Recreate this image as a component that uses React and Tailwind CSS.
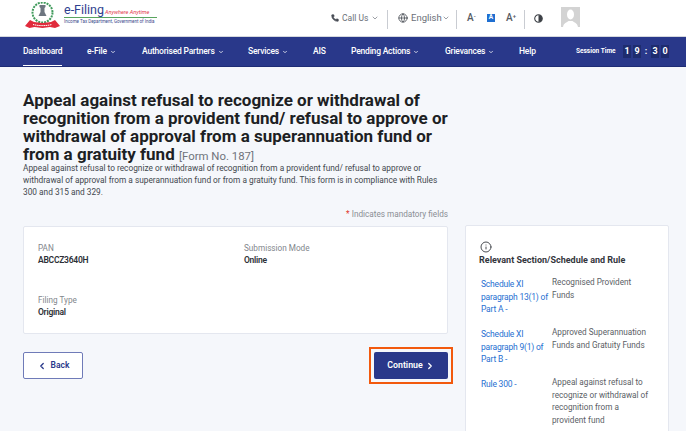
import { ChevronDown, ChevronLeft, ChevronRight, Globe, Info, Phone } from "lucide-react";

const navItems = [
  { label: "Dashboard", width: "w-[64px]", active: true },
  { label: "e-File", width: "w-[55px]", caret: true },
  { label: "Authorised Partners", width: "w-[106px]", caret: true },
  { label: "Services", width: "w-[65px]", caret: true },
  { label: "AIS", width: "w-[38px]" },
  { label: "Pending Actions", width: "w-[94px]", caret: true },
  { label: "Grievances", width: "w-[74px]", caret: true },
  { label: "Help", width: "w-[57px]" },
];

const sections = [
  { rule: "Schedule XI paragraph 13(1) of Part A -", text: "Recognised Provident Funds", height: "h-[50px]" },
  { rule: "Schedule XI paragraph 9(1) of Part B -", text: "Approved Superannuation Funds and Gratuity Funds", height: "h-[50px]" },
  { rule: "Rule 300 -", text: "Appeal against refusal to recognize or withdrawal of recognition from a provident fund", height: "h-[50px]" },
];

function Emblem() {
  return (
    <svg width="37" height="27" viewBox="0 0 37 27" className="mt-[2px] shrink-0">
      <circle cx="18.500" cy="10.500" r="10" fill="none" stroke="#3f9a5b" strokeWidth="2" strokeDasharray="2 1" />
      <path d="M15.500 3h6v2l-1 1v4l2 4h-8l2-4V6l-1-1z" fill="#6d7680" />
      <path d="M1 24l5-6 4 2 8.500 1 8.500-1 4-2 5 6-5 2-5-1-7.500 1-8-1-5 1z" fill="#e02b3c" />
      <path d="M9 22.500c6 1.500 13 1.500 19 0" fill="none" stroke="#fff" strokeWidth="1" strokeDasharray="1.500 .6" />
    </svg>
  );
}

function Divider() {
  return <div className="mt-[2px] h-[19px] w-px bg-[#c9ccd2]" />;
}

function Header() {
  return (
    <header className="flex h-[37px] items-center border-b border-[#d5d8de] bg-white text-[#6b7078]">
      <div className="ml-[24px] flex items-start self-start">
        <Emblem />
        <div className="ml-[3px] mt-[4px] w-[93px]">
          <div className="flex h-[14px] items-baseline border-b border-[#59a55f] pb-[1px] leading-none">
            <span className="text-[12.500px] leading-none text-[#2f3f8f]">e-Filing</span>
            <span className="ml-[1px] whitespace-nowrap text-[5.500px] italic leading-none text-[#e23a4c]">Anywhere Anytime</span>
          </div>
          <div className="mt-[1px] whitespace-nowrap text-[4.500px] leading-[6px] text-[#3c4a8c]">
            Income Tax Department, Government of India
          </div>
        </div>
      </div>
      <div className="ml-[174px] flex items-center">
        <div className="flex w-[56px] items-center text-[8.500px]">
          <Phone size={8} className="text-[#4a4f57]" fill="#4a4f57" />
          <span className="ml-[3px]">Call Us</span>
          <ChevronDown size={8} className="ml-[3px]" />
        </div>
        <Divider />
        <div className="ml-[10px] flex w-[58px] items-center text-[9.500px]">
          <Globe size={10} className="text-[#4a4f57]" />
          <span className="ml-[3px]">English</span>
          <ChevronDown size={8} />
        </div>
        <Divider />
        <div className="ml-[10px] flex w-[57px] items-center text-[#555a62]">
          <span className="w-[20px] text-[10px] font-medium leading-none">A<span className="align-top text-[6px]">-</span></span>
          <span className="flex h-[8px] w-[8px] items-center justify-center bg-[#1f6fd1] text-[6.500px] font-bold text-white">A</span>
          <span className="ml-[11px] text-[10px] font-medium leading-none">A<span className="align-top text-[6px]">+</span></span>
        </div>
        <Divider />
        <svg width="9" height="9" viewBox="0 0 10 10" className="ml-[9px]">
          <circle cx="5" cy="5" r="4.200" fill="none" stroke="#3c4046" strokeWidth="1.200" />
          <path d="M5 1a4 4 0 0 1 0 8z" fill="#3c4046" />
        </svg>
        <svg width="19" height="20" viewBox="0 0 19 20" className="-mt-[3px] ml-[18px]">
          <rect width="19" height="20" fill="#d3d3d3" />
          <ellipse cx="9.500" cy="7.500" rx="3.500" ry="5" fill="#fff" />
          <path d="M2 20c.5-4 4-4.500 5.500-6h4c1.500 1.500 5 2 5.500 6z" fill="#fff" />
        </svg>
      </div>
    </header>
  );
}

function Nav() {
  return (
    <nav className="flex h-[30px] items-center border-b border-[#1e2c75] bg-[#29388a] pl-[23px] text-[8.500px] font-medium text-white">
      {navItems.map((item) => (
        <div key={item.label} className={`relative flex h-[29px] items-center whitespace-nowrap tracking-[-0.2px] ${item.width}`}>
          <span>{item.label}</span>
          {item.caret && <ChevronDown size={6} strokeWidth={3} className="ml-[3px]" />}
          {item.active && <div className="absolute bottom-0 left-0 h-[1px] w-[39px] bg-white" />}
        </div>
      ))}
      <div className="flex items-center">
        <span className="mr-[5px] w-[42px] whitespace-nowrap text-[6.500px] font-bold">Session Time</span>
        <span className="flex h-[13px] w-[8px] items-center justify-center bg-[#1e2c6e] text-[9px] font-bold">1</span>
        <span className="ml-[2px] flex h-[13px] w-[8px] items-center justify-center bg-[#1e2c6e] text-[9px] font-bold">9</span>
        <span className="w-[10px] text-center text-[9px] font-bold">:</span>
        <span className="flex h-[13px] w-[8px] items-center justify-center bg-[#1e2c6e] text-[9px] font-bold">3</span>
        <span className="ml-[2px] flex h-[13px] w-[8px] items-center justify-center bg-[#1e2c6e] text-[9px] font-bold">0</span>
      </div>
    </nav>
  );
}

function Field({ label, value }) {
  return (
    <div>
      <div className="text-[8.200px] leading-[12px] text-[#82868c]">{label}</div>
      <div className="text-[8.500px] font-semibold leading-[12px] tracking-[-0.25px] text-[#2c2f36]">{value}</div>
    </div>
  );
}

export default function App() {
  return (
    <div className="h-[431px] w-[686px] overflow-hidden bg-[#f5f7fb] font-['Roboto',sans-serif]">
      <Header />
      <Nav />
      <main className="flex pl-[23px]">
        <div className="w-[425px]">
          <h1 className="mt-[24px] text-[17px] font-bold leading-[18px] text-[#1d1f24]">
            Appeal against refusal to recognize or withdrawal of recognition from a provident fund/ refusal to approve or withdrawal of approval from a superannuation fund or from a gratuity fund{" "}
            <span className="text-[11.400px] font-normal leading-none text-[#70747b]">[Form No. 187]</span>
          </h1>
          <p className="-mt-[1px] pr-[10px] text-[8.300px] leading-[12px] text-[#43474e]">
            Appeal against refusal to recognize or withdrawal of recognition from a provident fund/ refusal to approve or withdrawal of approval from a superannuation fund or from a gratuity fund. This form is in compliance with Rules 300 and 315 and 329.
          </p>
          <div className="mt-[10px] text-right text-[8.200px] leading-[12px] text-[#8a8e94]">
            <span className="text-[#e0352b]">*</span> Indicates mandatory fields
          </div>
          <section className="mt-[6px] h-[108px] rounded-[2px] border border-[#e4e7ef] bg-white pl-[14px] pt-[15px]">
            <div className="grid grid-cols-[206px_1fr] gap-y-[28px]">
              <Field label="PAN" value="ABCCZ3640H" />
              <Field label="Submission Mode" value="Online" />
              <Field label="Filing Type" value="Original" />
            </div>
          </section>
          <div className="mt-[13px] flex items-center justify-between">
            <button className="flex h-[27px] w-[60px] items-center justify-center rounded-[2px] border border-[#6f7bb8] bg-white text-[8.500px] font-semibold text-[#29388a]">
              <ChevronLeft size={10} strokeWidth={3} className="mr-[4px]" />
              Back
            </button>
            <div className="-mr-[5px] border-[2px] border-[#f2590d] p-[3px]">
              <button className="flex h-[27px] w-[74px] items-center justify-center rounded-[2px] bg-[#29388a] text-[8.800px] font-semibold text-white">
                Continue
                <ChevronRight size={10} strokeWidth={3} className="ml-[2px]" />
              </button>
            </div>
          </div>
        </div>
        <aside className="ml-[17px] mt-[158px] h-[300px] w-[204px] shrink-0 rounded-[2px] border border-[#e4e7ef] bg-white pl-[13px] pt-[15px]">
          <Info size={12} className="ml-[1px] text-[#4a4d52]" />
          <div className="mt-[1px] whitespace-nowrap text-[9px] font-bold leading-[12px] text-[#33363c]">Relevant Section/Schedule and Rule</div>
          <div className="mt-[10px]">
            {sections.map((s) => (
              <div key={s.rule} className={`flex leading-[12.500px] ${s.height}`}>
                <div className="ml-[2px] w-[71px] pt-[2px] text-[8.500px] tracking-[-0.2px] text-[#1f6fd1]">{s.rule}</div>
                <div className="w-[100px] text-[8.200px] text-[#5a5e65]">{s.text}</div>
              </div>
            ))}
          </div>
        </aside>
      </main>
    </div>
  );
}
